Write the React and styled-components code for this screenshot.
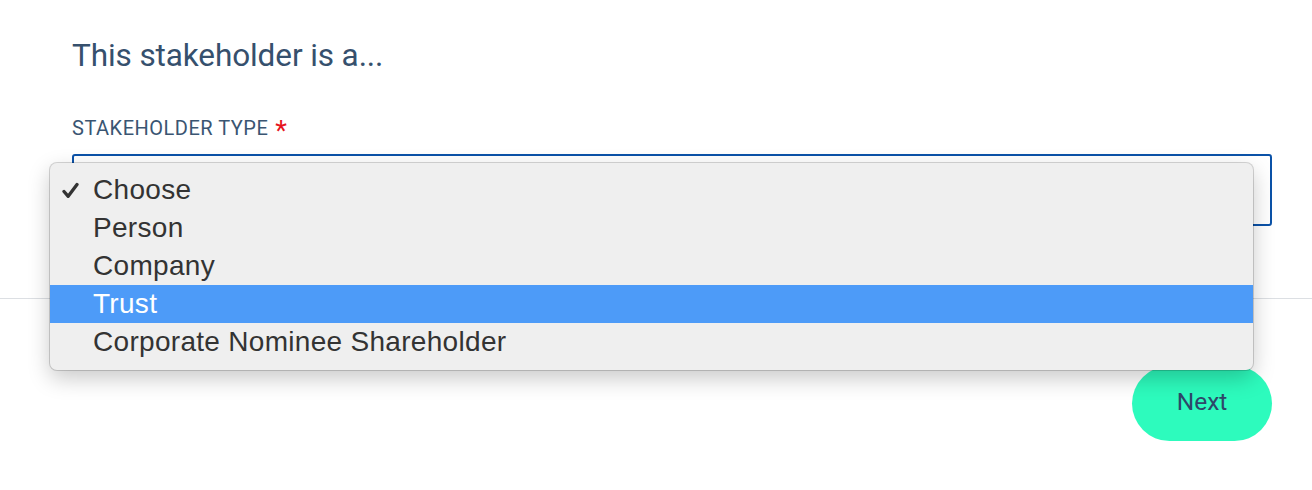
import React from "react";
import styled, { createGlobalStyle } from "styled-components";

const Global = createGlobalStyle`
  html, body { margin: 0; padding: 0; background: #ffffff; }
  body { font-family: Roboto, "Liberation Sans", sans-serif; }
`;

const Page = styled.div`
  position: relative;
  width: 1312px;
  height: 490px;
  overflow: hidden;
  background: #ffffff;
`;

const Form = styled.section`
  display: flex;
  flex-direction: column;
  padding: 37px 40px 0 72px;
`;

const Heading = styled.h2`
  margin: 0;
  font-family: Roboto, sans-serif;
  font-weight: 400;
  font-size: 31.5px;
  line-height: 38px;
  color: #36506d;
  letter-spacing: -0.1px;
`;

const Label = styled.label`
  margin-top: 41px;
  display: flex;
  align-items: center;
  gap: 7px;
  font-family: Roboto, sans-serif;
  font-size: 20px;
  line-height: 24px;
  color: #3a5572;
  text-transform: uppercase;
  letter-spacing: 0.5px;
`;

const Required = styled.span`
  color: #e6141e;
  font-size: 27px;
  line-height: 24px;
  position: relative;
  top: 3px;
`;

const SelectBox = styled.div`
  margin-top: 14px;
  height: 68px;
  border: 2px solid #0b52a8;
  border-radius: 3px;
  background: #ffffff;
`;

const Divider = styled.hr`
  margin: 72px 0 0;
  border: none;
  border-top: 1px solid #dcdfe3;
  height: 0;
`;

const Footer = styled.div`
  display: flex;
  justify-content: flex-end;
  padding: 67px 40px 0 0;
`;

const NextButton = styled.button`
  width: 140px;
  height: 75px;
  padding: 0 0 5px;
  border: none;
  border-radius: 38px;
  background: #2dfbbd;
  color: #2e4869;
  font-family: Roboto, sans-serif;
  font-size: 24.5px;
  cursor: pointer;
`;

const Menu = styled.ul`
  position: absolute;
  left: 50px;
  top: 163px;
  width: 1203px;
  margin: 0;
  padding: 8px 0 9px;
  list-style: none;
  box-sizing: border-box;
  background: #efefef;
  border-radius: 7px;
  box-shadow: 0 0 0 1px rgba(0, 0, 0, 0.16), 0 8px 22px rgba(0, 0, 0, 0.22);
`;

const Option = styled.li`
  position: relative;
  height: 38px;
  display: flex;
  align-items: center;
  padding-left: 43px;
  font-family: "Liberation Sans", Arial, sans-serif;
  font-size: 28px;
  letter-spacing: 0.3px;
  color: ${(p) => (p.$active ? "#ffffff" : "#333333")};
  background: ${(p) => (p.$active ? "#4d9bf8" : "transparent")};
`;

const Check = styled.svg`
  position: absolute;
  left: 12px;
  top: 11px;
  width: 17px;
  height: 17px;
`;

const options = ["Choose", "Person", "Company", "Trust", "Corporate Nominee Shareholder"];

export default function App() {
  return (
    <Page>
      <Global />
      <Form>
        <Heading>This stakeholder is a...</Heading>
        <Label>
          Stakeholder type <Required>*</Required>
        </Label>
        <SelectBox />
      </Form>
      <Divider />
      <Footer>
        <NextButton>Next</NextButton>
      </Footer>
      <Menu>
        {options.map((o, i) => (
          <Option key={o} $active={o === "Trust"}>
            {i === 0 && (
              <Check viewBox="0 0 17 17">
                <path d="M2 9.5 L6.2 14.3 L15 2.5" fill="none" stroke="#333333" strokeWidth="3.3" strokeLinecap="round" strokeLinejoin="round" />
              </Check>
            )}
            {o}
          </Option>
        ))}
      </Menu>
    </Page>
  );
}
